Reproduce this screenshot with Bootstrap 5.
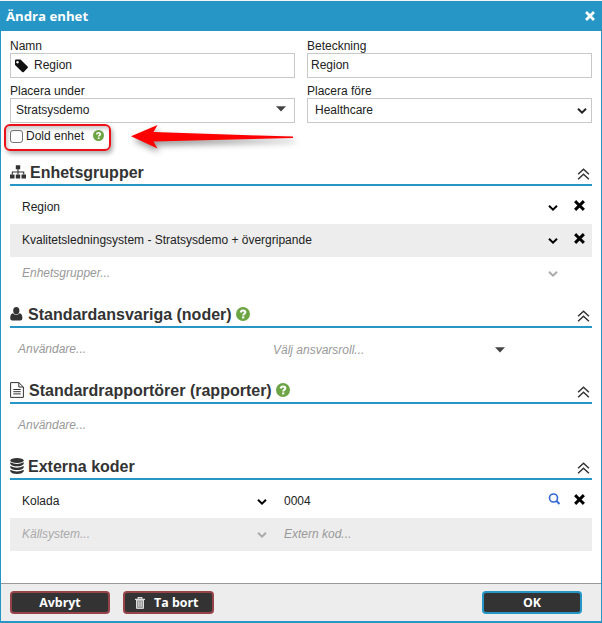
<!DOCTYPE html>
<html lang="sv">
<head>
<meta charset="utf-8">
<meta name="viewport" content="width=device-width, initial-scale=1">
<title>Ändra enhet</title>
<link href="https://cdn.jsdelivr.net/npm/bootstrap@5.3.0/dist/css/bootstrap.min.css" rel="stylesheet">
<style>
  :root { --blue: #2696c7; }
  body { font-family: "Liberation Sans", Arial, sans-serif; font-size: 12px; line-height: 15px; color: #222; background: #f4f4f4; }
  svg { display: block; flex: none; }
  .dialog { height: 622px; margin-top: 1px; border: solid var(--blue); border-width: 0 1px 2px; }
  .titlebar { height: 30px; background: var(--blue); padding: 0 6px 0 5px; font: bold 13.2px/30px "Open Sans", "Noto Sans", sans-serif; }
  .content { padding: 7px 9px 0; height: 552px; }
  .fields { display: grid; grid-template-columns: 285px 285px; column-gap: 12px; row-gap: 5px; }
  .fields label { display: block; height: 15px; line-height: 17px; }
  .field { height: 25px; border: 1px solid #c8c8c8; border-radius: 0; font-size: 12px; line-height: 23px; padding: 0 4px 0 3px; color: #222; }
  .tag-icon { margin-right: 5px; }
  .unit-name { padding-left: 2px; }
  .hidden-unit { height: 26px; margin-bottom: 11px; }
  .hidden-unit input { width: 13px; height: 13px; margin: 0 3px 0 0; border: 1px solid #767676; border-radius: 2px; }
  .hidden-help { margin: 0 0 1px 9px; }
  .section-head { height: 26px; border-bottom: 2px solid var(--blue); padding-right: 2px; margin-bottom: 5px; }
  .section-head h2 { font-size: 16px; line-height: 24px; font-weight: 700; margin: 0; color: #333; }
  .section-head h2 span { padding-top: 2px; }
  .after-gap { margin-bottom: 12px; }
  .line { height: 33px; color: #222; padding-left: 12px; }
  .line.shade { background: #ededed; }
  .hint { font-style: italic; color: #999; }
  .dim { color: #aaa; }
  .col-name { width: 526px; }
  .col-system { width: 235px; }
  .col-code { width: 281px; }
  .code-text { padding-left: 17px; }
  .col-user { width: 255px; }
  .col-role { width: 222px; padding-top: 2px; }
  .find { margin: 0 9px 5px 0; }
  .actions { height: 38px; background: #ededed; border-top: 1px solid #999; padding: 7px 19px 0 9px; }
  .act { height: 23px; width: 100px; padding: 0; background: #333; color: #fff; border: 2px solid #96434a; border-radius: 4px; font: bold 12.4px/18px "Open Sans", "Noto Sans", sans-serif; }
  .act.ok { border-color: var(--blue); }
  .act.del { width: 91px; margin-left: 13px; padding-left: 10px; }
  .bin { margin-right: 9px; }
  .frame-mark { left: 4px; top: 124px; width: 107px; height: 27px; border: 2px solid #ee1017; border-radius: 6px; box-shadow: 2px 3px 4px rgba(0,0,0,.3), inset 2px 3px 4px rgba(0,0,0,.2); pointer-events: none; }
  .arrow-mark { left: 120px; top: 116px; filter: drop-shadow(2px 4px 3px rgba(0,0,0,.4)); pointer-events: none; }
</style>
</head>
<body>
<svg width="0" height="0" class="position-absolute">
  <symbol id="down" viewBox="0 0 10 8"><path d="M1 1.800 5 5.600 9 1.800" fill="none" stroke="currentColor" stroke-width="2"/></symbol>
  <symbol id="caret" viewBox="0 0 10 6"><path d="M0 .3h10L5 5.500z" fill="#444"/></symbol>
  <symbol id="cross" viewBox="0 0 11 11"><path d="M2.200 2.200 8.800 8.800M8.800 2.200 2.200 8.800" fill="none" stroke="currentColor" stroke-width="3" stroke-linecap="square"/></symbol>
  <symbol id="fold" viewBox="0 0 12 12"><path d="M.6 6.300 6 1.200l5.400 5.100M.6 11.300 6 6.200l5.400 5.100" fill="none" stroke="#333" stroke-width="1.500"/></symbol>
  <symbol id="help" viewBox="0 0 14 14"><circle cx="7" cy="7" r="7" fill="#6da544"/><path d="M4.700 5.500C4.900 4 5.900 3.500 7 3.500c1.300 0 2.300.7 2.300 1.800C9.300 6.700 7.200 6.800 7.200 8.400" fill="none" stroke="#fff" stroke-width="2.100"/><path d="M6.100 9.400h2.200v2H6.100z" fill="#fff"/></symbol>
</svg>

<div class="dialog bg-white">
  <div class="titlebar d-flex justify-content-between align-items-center text-white">
    <span>Ändra enhet</span>
    <svg width="10" height="10"><use href="#cross"/></svg>
  </div>

  <div class="content">
    <div class="fields">
      <div>
        <label>Namn</label>
        <div class="field d-flex align-items-center">
          <svg width="15" height="14" viewBox="0 0 15 14" class="tag-icon"><path fill-rule="evenodd" d="M1 1.500Q1 .5 2 .5H6.500L13.600 7.500Q14.400 8.300 13.600 9.100L9.800 12.900Q9 13.600 8.200 12.900L1 6zM3.500 1.900a1.300 1.300 0 1 0 .01 0z" fill="#111"/></svg>
          <span>Region</span>
        </div>
      </div>
      <div>
        <label>Beteckning</label>
        <div class="field">Region</div>
      </div>
      <div>
        <label>Placera under</label>
        <div class="field d-flex align-items-center justify-content-between">
          <span class="unit-name">Stratsysdemo</span>
          <svg width="10" height="6" class="me-1 mb-1"><use href="#caret"/></svg>
        </div>
      </div>
      <div>
        <label>Placera före</label>
        <div class="field d-flex align-items-center justify-content-between">
          <span class="ps-1">Healthcare</span>
          <svg width="10" height="8"><use href="#down"/></svg>
        </div>
      </div>
    </div>

    <div class="hidden-unit d-flex align-items-center">
      <input type="checkbox" class="form-check-input" id="dold">
      <label for="dold">Dold enhet</label>
      <svg width="11" height="11" class="hidden-help"><use href="#help"/></svg>
    </div>

    <div class="section-head d-flex align-items-center justify-content-between">
      <h2 class="d-flex align-items-center gap-1">
        <svg width="16" height="14" viewBox="0 0 16 14"><path d="M5.800.3h4.400v4H5.800zM0 9.500h4.500v4H0zM5.800 9.500h4.400v4H5.800zM11.500 9.500H16v4h-4.500z" fill="#333"/><path d="M8 4v5.500M2.300 9.500V7h11.400v2.500" fill="none" stroke="#333" stroke-width="1.100"/></svg>
        <span>Enhetsgrupper</span>
      </h2>
      <svg width="13" height="12" class="mt-1"><use href="#fold"/></svg>
    </div>
    <div class="line d-flex align-items-center">
      <span class="col-name">Region</span>
      <svg width="10" height="8" class="me-3 text-black"><use href="#down"/></svg>
      <svg width="11" height="11" class="mb-1 text-black"><use href="#cross"/></svg>
    </div>
    <div class="line shade d-flex align-items-center">
      <span class="col-name">Kvalitetsledningsystem - Stratsysdemo + övergripande</span>
      <svg width="10" height="8" class="me-3 text-black"><use href="#down"/></svg>
      <svg width="11" height="11" class="mb-1 text-black"><use href="#cross"/></svg>
    </div>
    <div class="line after-gap d-flex align-items-center">
      <span class="col-name hint">Enhetsgrupper...</span>
      <svg width="10" height="8" class="dim"><use href="#down"/></svg>
    </div>

    <div class="section-head d-flex align-items-center justify-content-between">
      <h2 class="d-flex align-items-center gap-1">
        <svg width="14" height="14" viewBox="0 0 14 14"><ellipse cx="6.300" cy="3.700" rx="3.100" ry="3.600" fill="#333"/><path d="M2.900 6.300Q6.300 9.400 9.700 6.300 12.400 7 12.400 11.300 12.400 13.500 10.300 13.500H2.300Q.2 13.500.2 11.300.2 7 2.900 6.300z" fill="#333"/></svg>
        <span>Standardansvariga (noder)</span>
        <svg width="14" height="14"><use href="#help"/></svg>
      </h2>
      <svg width="13" height="12" class="mt-1"><use href="#fold"/></svg>
    </div>
    <div class="line after-gap d-flex align-items-center ps-2 hint">
      <span class="col-user">Användare...</span>
      <span class="col-role">Välj ansvarsroll...</span>
      <svg width="10" height="6"><use href="#caret"/></svg>
    </div>

    <div class="section-head d-flex align-items-center justify-content-between">
      <h2 class="d-flex align-items-center gap-1">
        <svg width="15" height="16" viewBox="0 0 15 16" fill="none" stroke="#333"><path d="M.6.6h8.200L13.400 5v10.400H.6zM8.800.6V5h4.600M3.300 7.500h7.400M3.300 9.700h7.400M3.300 11.900h7.400"/></svg>
        <span>Standardrapportörer (rapporter)</span>
        <svg width="14" height="14"><use href="#help"/></svg>
      </h2>
      <svg width="13" height="12" class="mt-1"><use href="#fold"/></svg>
    </div>
    <div class="line after-gap d-flex align-items-center ps-2 hint">Användare...</div>

    <div class="section-head d-flex align-items-center justify-content-between">
      <h2 class="d-flex align-items-center gap-1">
        <svg width="14" height="16" viewBox="0 0 14 16" fill="#333"><ellipse cx="7" cy="2.600" rx="6.700" ry="2.500"/><path d="M.3 4.200Q7 7.800 13.700 4.200V6Q12 8.300 7 8.300T.3 6zM.3 8Q7 11.600 13.700 8v1.800Q12 12.100 7 12.100T.3 9.800zM.3 11.700Q7 15.300 13.700 11.700v1.700Q12 15.900 7 15.900T.3 13.400z"/></svg>
        <span>Externa koder</span>
      </h2>
      <svg width="13" height="12" class="mt-1"><use href="#fold"/></svg>
    </div>
    <div class="line d-flex align-items-center">
      <span class="col-system">Kolada</span>
      <svg width="10" height="8" class="text-black"><use href="#down"/></svg>
      <span class="col-code code-text">0004</span>
      <svg width="13" height="12" viewBox="0 0 13 12" fill="none" stroke="#3367d6" class="find"><circle cx="5.500" cy="5" r="4" stroke-width="1.600"/><path d="m8.500 8 3 3" stroke-width="1.900"/></svg>
      <svg width="11" height="11" class="ms-1 mb-1 text-black"><use href="#cross"/></svg>
    </div>
    <div class="line shade d-flex align-items-center hint">
      <span class="col-system dim">Källsystem...</span>
      <svg width="10" height="8" class="dim"><use href="#down"/></svg>
      <span class="code-text">Extern kod...</span>
    </div>
  </div>

  <div class="actions d-flex">
    <button type="button" class="btn act">Avbryt</button>
    <button type="button" class="btn act del d-flex align-items-center">
      <svg width="10" height="12" viewBox="0 0 10 12" class="bin" fill="none" stroke="#ddd"><path d="M1.500 3h7v8.400h-7z" fill="#999"/><path d="M0 2.400h10M3.200 2.200V.7h3.600v1.500" stroke-width="1.200"/><path d="M3.500 4.500v5.300M5 4.500v5.300M6.500 4.500v5.300" stroke-width=".6"/></svg>
      Ta bort
    </button>
    <button type="button" class="btn act ok ms-auto">OK</button>
  </div>
</div>

<div class="frame-mark position-absolute"></div>
<svg class="arrow-mark position-absolute" width="180" height="44" viewBox="120 116 180 44"><path d="M131 136.300 157.500 125 153.500 132 293 136.600V138L153.500 141.500 157.500 148.500z" fill="#f00"/></svg>
<script src="https://cdn.jsdelivr.net/npm/bootstrap@5.3.0/dist/js/bootstrap.bundle.min.js"></script>
</body>
</html>
